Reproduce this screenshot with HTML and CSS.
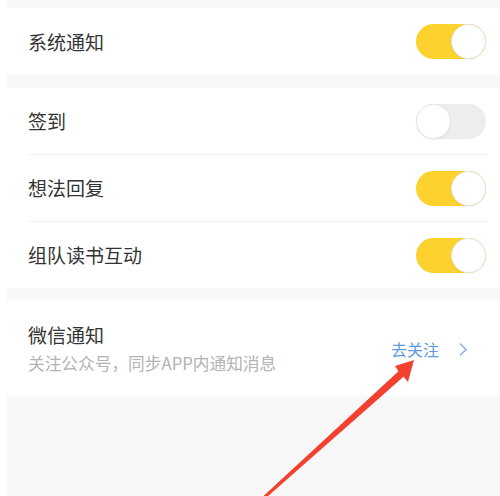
FILE: index.html
```html
<!DOCTYPE html>
<html>

<head>
    <meta charset="utf-8" />
    <title>通知设置</title>
    <meta name="viewport" content="width=device-width, initial-scale=1">
    <link rel="stylesheet" href="styles.css">
</head>

<body>
    <div class="page">
        <!-- 系统通知 -->
        <section class="card">
            <div class="row row-first">
                <span class="label">系统通知</span>
                <span class="switch on"><i></i></span>
            </div>
        </section>

        <!-- 互动通知 -->
        <section class="card">
            <div class="row line">
                <span class="label">签到</span>
                <span class="switch"><i></i></span>
            </div>
            <div class="row line">
                <span class="label">想法回复</span>
                <span class="switch on"><i></i></span>
            </div>
            <div class="row">
                <span class="label">组队读书互动</span>
                <span class="switch on"><i></i></span>
            </div>
        </section>

        <!-- 微信通知 -->
        <section class="card">
            <div class="wechat">
                <div class="text">
                    <div class="label">微信通知</div>
                    <div class="sub">关注公众号，同步APP内通知消息</div>
                </div>
                <a class="follow" href="#">
                    <span>去关注</span>
                    <svg width="10" height="15" viewBox="0 0 10 15">
                        <polyline points="2,1.5 8,7.5 2,13.5" fill="none" stroke="#8db1ec" stroke-width="1.6" />
                    </svg>
                </a>
            </div>
        </section>
    </div>

    <!-- 红色箭头标注 -->
    <svg class="arrow" width="500" height="496" viewBox="0 0 500 496">
        <polygon fill="#f4402f"
            points="414,360 395,366 398.5,371.2 261.3,498 264.7,499 403.5,376.8 408,382" />
    </svg>
</body>

</html>
```

FILE: styles.css
```css
body {
  margin: 0;
  background: #fff;
  font-family: "Noto Sans CJK SC", "Noto Sans", sans-serif;
}

.page {
  /* 左边留一条白边 */
  margin-left: 7px;
  padding-top: 8px;
  min-height: 488px;
  background: #f8f8f8;
}

.card {
  background: #fff;
  margin-bottom: 12px;
}

.card:first-child {
  margin-bottom: 13px;
}

.row {
  display: flex;
  align-items: center;
  justify-content: space-between;
  height: 66px;
  margin: 0 14px 0 21px;
}

.row-first {
  height: 67px;
}

.line {
  border-bottom: 1px solid #f0f0f0;
}

.label {
  font-size: 19px;
  line-height: 26px;
  color: #333;
}

/* 开关 */
.switch {
  position: relative;
  width: 70px;
  height: 35px;
  border-radius: 18px;
  background: #ededed;
}

.switch i {
  position: absolute;
  top: 0;
  left: 0;
  width: 35px;
  height: 35px;
  box-sizing: border-box;
  border-radius: 50%;
  background: #fff;
  border: 1px solid #e6e6e6;
  box-shadow: 0 1px 2px rgba(0, 0, 0, .06);
}

.switch.on {
  background: #fdd22e;
}

.switch.on i {
  left: 35px;
}

.wechat {
  display: flex;
  align-items: center;
  justify-content: space-between;
  padding: 22px 32px 22px 21px;
}

.sub {
  margin-top: 4px;
  font-size: 16.7px;
  line-height: 22px;
  color: #b3b3b3;
}

.follow {
  display: flex;
  align-items: center;
  gap: 19px;
  margin-top: 2px;
  font-size: 16px;
  color: #5e9be0;
  text-decoration: none;
}

/* 箭头盖在内容上面 */
.arrow {
  position: absolute;
  top: 0;
  left: 0;
  pointer-events: none;
}
```
